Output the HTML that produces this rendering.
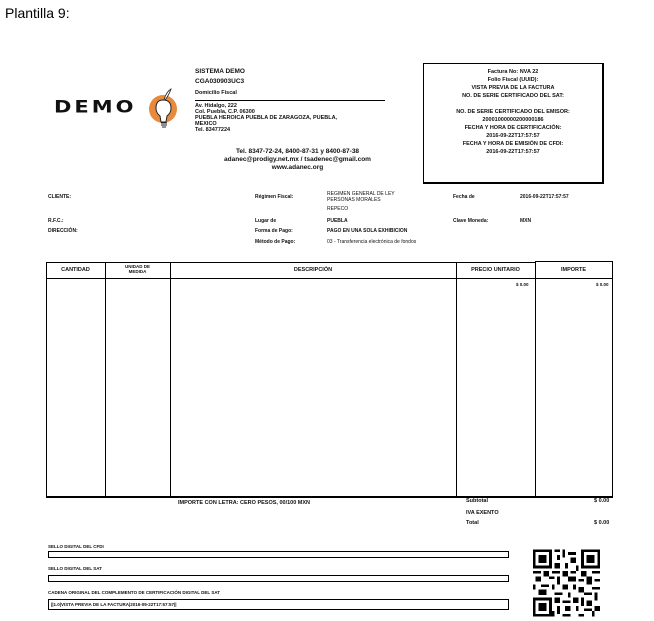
<!DOCTYPE html>
<html><head><meta charset="utf-8"><style>
body{margin:0;width:654px;height:621px;background:#fff;position:relative;font-family:"Liberation Sans",Arial,sans-serif;color:#111;overflow:hidden}
.a{position:absolute;white-space:nowrap}
.s{font-size:5.5px;font-weight:bold;line-height:7px}
.m{font-size:6.5px;font-weight:bold;line-height:8px}
.c{text-align:center}
.v{position:absolute;background:#000;width:1px}
.h{position:absolute;background:#000;height:1px}
.bar{position:absolute;border:1px solid #000;height:5px;left:48px;width:459px}
</style></head><body>
<div class="a" style="left:5px;top:5px;font-size:14px;color:#000">Plantilla 9:</div>

<div class="a" style="left:54px;top:95px;font-size:21px;font-weight:bold;letter-spacing:3px;font-family:'DejaVu Sans',sans-serif;transform:scaleY(0.8);color:#111">DEMO</div>
<svg class="a" style="left:145px;top:85px" width="36" height="46" viewBox="0 0 36 46">
<circle cx="18" cy="24" r="14" fill="#e88a3c"/>
<path d="M18 15 q-7 0 -7 8 q0 5 4 8 l1 6 h5 l1-6 q4-3 4-8 q0-8 -8-8z" fill="#fff" stroke="#222" stroke-width="1"/>
<path d="M16 38 h6 M16 40 h6 M17 42 h4" stroke="#222" stroke-width="1"/>
<path d="M19 15 q2-8 7-11 q-2 6 -6 11z" fill="#fff" stroke="#222" stroke-width="0.8"/>
</svg>

<div class="a m" style="left:195px;top:68px">SISTEMA DEMO</div>
<div class="a m" style="left:195px;top:78px">CGA030903UC3</div>
<div class="a s" style="left:195px;top:90px">Domicilio Fiscal</div>
<div class="h" style="left:195px;top:100px;width:190px"></div>
<div class="a s" style="left:195px;top:103px;line-height:6px">Av. Hidalgo, 222<br>Col. Puebla, C.P. 06300<br>PUEBLA HEROICA PUEBLA DE ZARAGOZA, PUEBLA,<br>MEXICO<br>Tel. 83477224</div>
<div class="a m c" style="left:210px;top:148px;width:175px;line-height:8px">Tel. 8347-72-24, 8400-87-31 y 8400-87-38<br>adanec@prodigy.net.mx / tsadenec@gmail.com<br>www.adanec.org</div>

<div class="a" style="left:423px;top:63px;width:178px;height:118px;border:1px solid #000;border-width:1px 2px 2px 1px"></div>
<div class="a s c" style="left:423px;top:68px;width:180px;line-height:8px">Factura No: NVA 22<br>Folio Fiscal (UUID):<br>VISTA PREVIA DE LA FACTURA<br>NO. DE SERIE CERTIFICADO DEL SAT:<br><br>NO. DE SERIE CERTIFICADO DEL EMISOR:<br>20001000000200000186<br>FECHA Y HORA DE CERTIFICACIÓN:<br>2016-09-22T17:57:57<br>FECHA Y HORA DE EMISIÓN DE CFDI:<br>2016-09-22T17:57:57</div>

<div class="a s" style="left:48px;top:194px;font-size:5px">CLIENTE:</div>
<div class="a s" style="left:48px;top:218px;font-size:5px">R.F.C.:</div>
<div class="a s" style="left:48px;top:228px;font-size:5px">DIRECCIÓN:</div>
<div class="a s" style="left:255px;top:194px;font-size:5px">Régimen Fiscal:</div>
<div class="a s" style="left:327px;top:191px;font-size:5px;line-height:6px;font-weight:normal">REGIMEN GENERAL DE LEY<br>PERSONAS MORALES</div>
<div class="a s" style="left:327px;top:206px;font-size:5px;font-weight:normal">REPECO</div>
<div class="a s" style="left:453px;top:194px;font-size:5px">Fecha de</div>
<div class="a s" style="left:520px;top:194px;font-size:5px">2016-09-22T17:57:57</div>
<div class="a s" style="left:255px;top:218px;font-size:5px">Lugar de</div>
<div class="a s" style="left:327px;top:218px;font-size:5px">PUEBLA</div>
<div class="a s" style="left:453px;top:218px;font-size:5px">Clave Moneda:</div>
<div class="a s" style="left:520px;top:218px;font-size:5px">MXN</div>
<div class="a s" style="left:255px;top:228px;font-size:5px">Forma de Pago:</div>
<div class="a s" style="left:327px;top:228px;font-size:5px">PAGO EN UNA SOLA EXHIBICION</div>
<div class="a s" style="left:255px;top:239px;font-size:5px">Método de Pago:</div>
<div class="a s" style="left:327px;top:239px;font-size:5px;font-weight:normal">03 - Transferencia electrónica de fondos</div>

<div class="h" style="left:46px;top:262px;width:490px"></div>
<div class="h" style="left:535px;top:261px;width:78px"></div>
<div class="h" style="left:46px;top:278px;width:567px"></div>
<div class="h" style="left:46px;top:496px;width:567px;height:2px"></div>
<div class="v" style="left:46px;top:262px;height:235px"></div>
<div class="v" style="left:105px;top:262px;height:235px"></div>
<div class="v" style="left:170px;top:262px;height:235px"></div>
<div class="v" style="left:456px;top:262px;height:235px"></div>
<div class="v" style="left:535px;top:261px;height:236px"></div>
<div class="v" style="left:612px;top:261px;height:236px"></div>
<div class="a s c" style="left:46px;top:267px;width:59px">CANTIDAD</div>
<div class="a s c" style="left:105px;top:264px;width:65px;font-size:4.5px;line-height:5px">UNIDAD DE<br>MEDIDA</div>
<div class="a s c" style="left:170px;top:267px;width:286px">DESCRIPCIÓN</div>
<div class="a s c" style="left:456px;top:267px;width:79px">PRECIO UNITARIO</div>
<div class="a s c" style="left:535px;top:267px;width:77px">IMPORTE</div>
<div class="a s" style="left:516px;top:281px;font-size:4.5px">$ 0.00</div>
<div class="a s" style="left:596px;top:281px;font-size:4.5px">$ 0.00</div>

<div class="a s" style="left:178px;top:500px">IMPORTE CON LETRA: CERO PESOS, 00/100 MXN</div>
<div class="a s" style="left:466px;top:498px">Subtotal</div>
<div class="a s" style="left:594px;top:498px">$ 0.00</div>
<div class="a s" style="left:466px;top:510px">IVA EXENTO</div>
<div class="a s" style="left:466px;top:520px">Total</div>
<div class="a s" style="left:594px;top:520px">$ 0.00</div>

<div class="a s" style="left:48px;top:543px;font-size:4.5px">SELLO DIGITAL DEL CFDI</div>
<div class="bar" style="top:551px"></div>
<div class="a s" style="left:48px;top:565px;font-size:4.5px">SELLO DIGITAL DEL SAT</div>
<div class="bar" style="top:575px"></div>
<div class="a s" style="left:48px;top:589px;font-size:4.5px">CADENA ORIGINAL DEL COMPLEMENTO DE CERTIFICACIÓN DIGITAL DEL SAT</div>
<div class="bar" style="top:599px;height:9px"></div>
<div class="a s" style="left:51px;top:601px;font-size:4.5px">||1.0|VISTA PREVIA DE LA FACTURA|2016-09-22T17:57:57||</div>

<svg class="a" style="left:533px;top:549px" width="67" height="68" viewBox="0 0 25 25" shape-rendering="crispEdges">
<g fill="#000"><path d="M0 0h7v7h-7zM18 0h7v7h-7zM0 18h7v7h-7z"/></g>
<g fill="#fff"><path d="M1 1h5v5h-5zM19 1h5v5h-5zM1 19h5v5h-5z"/></g>
<g fill="#000"><path d="M2 2h3v3h-3zM20 2h3v3h-3zM2 20h3v3h-3z"/>
<path d="M8 0h2v1h-2zM11 0h1v3h-1zM13 1h3v1h-3zM9 2h1v2h-1zM14 3h2v2h-2zM8 5h2v2h-2zM12 5h1v2h-1zM16 6h1v2h-1z
M0 8h3v1h-3zM4 8h2v2h-2zM7 8h3v1h-3zM11 8h2v2h-2zM14 8h2v1h-2zM18 8h2v2h-2zM22 8h3v1h-3z
M1 10h2v2h-2zM6 10h2v1h-2zM9 10h1v3h-1zM13 10h3v2h-3zM17 11h2v1h-2zM20 10h2v3h-2zM23 11h2v1h-2z
M0 13h1v2h-1zM3 13h3v1h-3zM7 13h1v2h-1zM11 13h2v2h-2zM15 13h1v2h-1zM17 14h2v2h-2zM22 14h3v1h-3z
M2 15h3v2h-3zM8 16h3v1h-3zM13 16h1v2h-1zM19 16h3v1h-3zM23 16h1v3h-1z
M8 18h2v2h-2zM11 19h3v1h-3zM15 18h2v2h-2zM18 18h1v3h-1zM20 19h2v2h-2z
M9 21h1v3h-1zM12 21h2v2h-2zM16 21h1v2h-1zM19 22h3v1h-3zM23 21h2v2h-2z
M11 24h3v1h-3zM17 24h2v1h-2zM22 23h1v2h-1zM7 23h1v2h-1z"/></g>
</svg>
</body></html>
